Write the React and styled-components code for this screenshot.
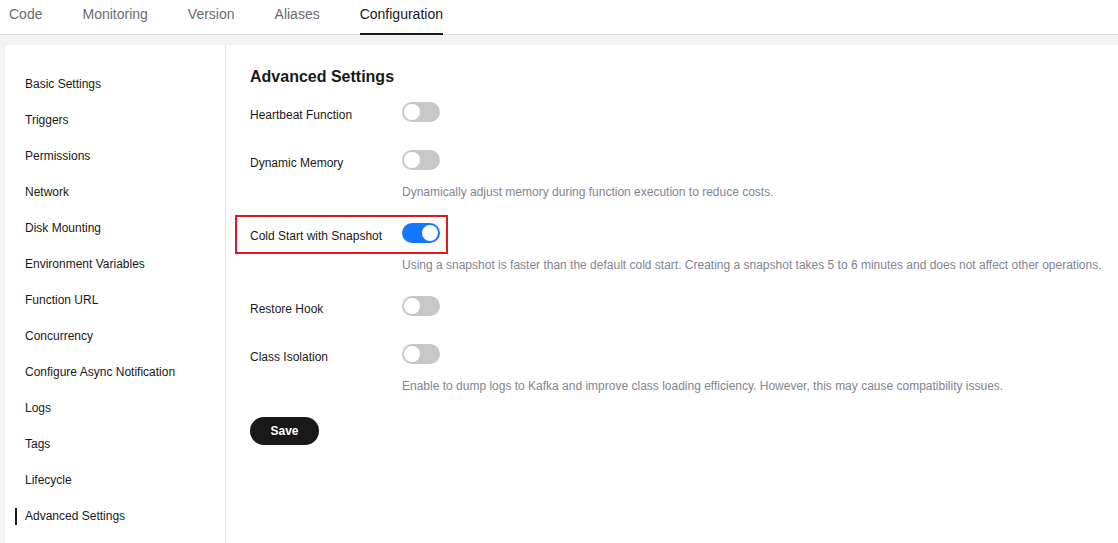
import React from "react";
import styled, { createGlobalStyle } from "styled-components";

const Global = createGlobalStyle`
  html, body { margin: 0; padding: 0; }
  body {
    font-family: "Liberation Sans", Arial, sans-serif;
    background: #f3f3f3;
    color: #191919;
  }
  * { box-sizing: border-box; }
`;

const Page = styled.div`
  min-height: 100vh;
  display: flex;
  flex-direction: column;
  background: #f3f3f3;
`;

const TabBar = styled.div`
  height: 35px;
  background: #fff;
  border-bottom: 1px solid #dcdcdc;
  display: flex;
  gap: 40px;
  padding-left: 9px;
`;

const Tab = styled.div`
  font-size: 14px;
  line-height: 16px;
  padding-top: 6px;
  color: ${(p) => (p.$active ? "#191919" : "#6b6b6b")};
  border-bottom: 2px solid ${(p) => (p.$active ? "#191919" : "transparent")};
  margin-bottom: -1px;
`;

const Main = styled.div`
  flex: 1;
  padding: 10px 0 0 5px;
  display: flex;
`;

const Card = styled.div`
  flex: 1;
  background: #fff;
  border-radius: 4px 0 0 0;
  display: flex;
`;

const Sidebar = styled.nav`
  width: 221px;
  border-right: 1px solid #e2e2e2;
  padding-top: 21px;
  display: flex;
  flex-direction: column;
`;

const NavItem = styled.div`
  height: 36px;
  display: flex;
  align-items: center;
  padding-left: 10px;
  font-size: 12px;
  color: #191919;
`;

const Marker = styled.span`
  width: 2px;
  height: 17px;
  margin-right: 8px;
  background: ${(p) => (p.$active ? "#191919" : "transparent")};
`;

const Content = styled.section`
  flex: 1;
  padding: 21px 0 0 24px;
`;

const Heading = styled.h2`
  margin: 0 0 14px;
  font-size: 16px;
  line-height: 22px;
  font-weight: bold;
  color: #191919;
`;

const Item = styled.div`
  margin-bottom: ${(p) => (p.$hasDesc ? "22px" : "28px")};
`;

const Row = styled.div`
  position: relative;
  display: flex;
  align-items: center;
  height: 20px;
`;

const Label = styled.div`
  width: 152px;
  font-size: 12px;
  line-height: 20px;
  color: #191919;
  padding-top: 5px;
`;

const Switch = styled.span`
  width: 38px;
  height: 20px;
  border-radius: 10px;
  background: ${(p) => (p.$on ? "#1476ff" : "#c7c7c7")};
  display: flex;
  align-items: center;
  justify-content: ${(p) => (p.$on ? "flex-end" : "flex-start")};
  padding: 0 2px;
`;

const Knob = styled.span`
  width: 16px;
  height: 16px;
  border-radius: 50%;
  background: #fff;
`;

const Desc = styled.div`
  margin: 13px 0 0 152px;
  font-size: 12px;
  line-height: 18px;
  color: #818591;
`;

const Highlight = styled.div`
  position: absolute;
  left: -15px;
  top: -8px;
  width: 213px;
  height: 39px;
  border: 2px solid #e5161d;
  pointer-events: none;
`;

const SaveButton = styled.button`
  height: 28px;
  width: 69px;
  border: none;
  border-radius: 14px;
  background: #191919;
  color: #fff;
  font-family: inherit;
  font-size: 12px;
  font-weight: bold;
  padding: 0;
`;

const tabs = ["Code", "Monitoring", "Version", "Aliases", "Configuration"];
const nav = [
  "Basic Settings",
  "Triggers",
  "Permissions",
  "Network",
  "Disk Mounting",
  "Environment Variables",
  "Function URL",
  "Concurrency",
  "Configure Async Notification",
  "Logs",
  "Tags",
  "Lifecycle",
  "Advanced Settings",
];

const settings = [
  { label: "Heartbeat Function", on: false },
  {
    label: "Dynamic Memory",
    on: false,
    desc: "Dynamically adjust memory during function execution to reduce costs.",
  },
  {
    label: "Cold Start with Snapshot",
    on: true,
    highlight: true,
    desc: "Using a snapshot is faster than the default cold start. Creating a snapshot takes 5 to 6 minutes and does not affect other operations.",
  },
  { label: "Restore Hook", on: false },
  {
    label: "Class Isolation",
    on: false,
    desc: "Enable to dump logs to Kafka and improve class loading efficiency. However, this may cause compatibility issues.",
  },
];

export default function App() {
  return (
    <Page>
      <Global />
      <TabBar>
        {tabs.map((t) => (
          <Tab key={t} $active={t === "Configuration"}>
            {t}
          </Tab>
        ))}
      </TabBar>
      <Main>
        <Card>
          <Sidebar>
            {nav.map((n) => (
              <NavItem key={n}>
                <Marker $active={n === "Advanced Settings"} />
                {n}
              </NavItem>
            ))}
          </Sidebar>
          <Content>
            <Heading>Advanced Settings</Heading>
            {settings.map((s) => (
              <Item key={s.label} $hasDesc={!!s.desc}>
                <Row>
                  <Label>{s.label}</Label>
                  <Switch $on={s.on}>
                    <Knob />
                  </Switch>
                  {s.highlight && <Highlight />}
                </Row>
                {s.desc && <Desc>{s.desc}</Desc>}
              </Item>
            ))}
            <SaveButton>Save</SaveButton>
          </Content>
        </Card>
      </Main>
    </Page>
  );
}
